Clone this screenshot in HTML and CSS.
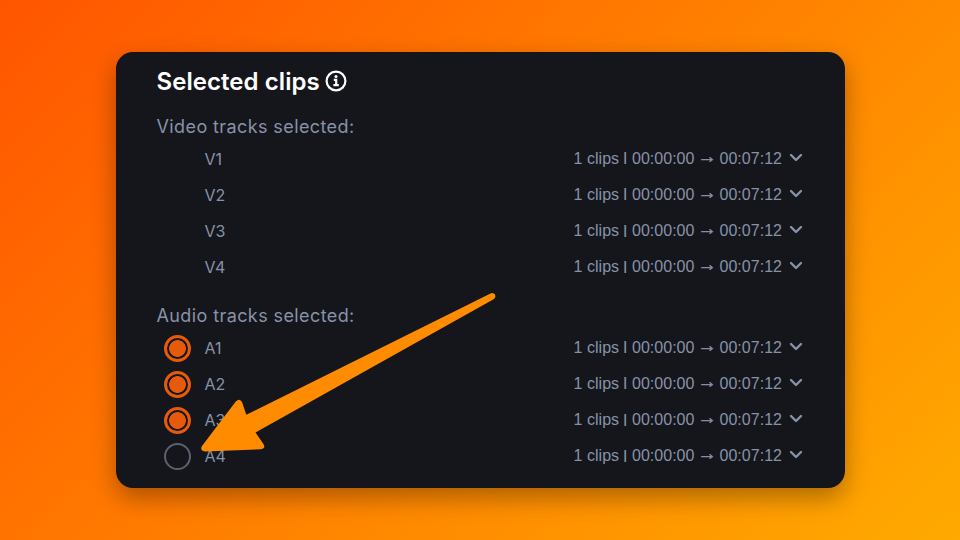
FILE: index.html
```html
<!doctype html>
<html lang="en">
    <head>
        <meta charset="UTF-8" />
        <meta name="viewport" content="width=device-width, initial-scale=1.0" />
        <title>Selected clips</title>
        <link rel="stylesheet" href="styles.css">
    </head>
    <body>
        <main class="card">
            <h1 class="title">
                <span>Selected clips</span>
                <svg class="info-icon" viewBox="0 0 22 22">
                    <circle cx="11" cy="11" r="9.4" />
                    <path d="M8.8 9.8h2.4v5M8.4 15.1h5.4" />
                    <circle class="dot" cx="11" cy="6.6" r="1.5" />
                </svg>
            </h1>

            <section class="tracks">
                <h2>Video tracks selected:</h2>
                <ul id="videoTracks"></ul>
            </section>

            <section class="tracks">
                <h2>Audio tracks selected:</h2>
                <ul id="audioTracks"></ul>
            </section>
        </main>

        <!-- arrow pointing at the A4 toggle -->
        <svg class="pointer" viewBox="0 0 960 540">
            <path d="M490.5 293.4Q493.5 292.2 495 294.6Q496.2 297.6 493.6 299.2L255.5 432.4L263.6 444.2Q265.8 448.6 261 449.2L205 451.4Q199.5 450.6 202 446L235.8 401.5Q239.8 397.4 242.2 402.4L246.3 414.7Z" />
        </svg>

        <script>
        const videoTracks = [{ name: "V1" }, { name: "V2" }, { name: "V3" }, { name: "V4" }];
        const audioTracks = [
            { name: "A1", selected: true },
            { name: "A2", selected: true },
            { name: "A3", selected: true },
            { name: "A4", selected: false },
        ];

        function renderTracks(id, tracks) {
            const list = document.getElementById(id);

            tracks.forEach((track) => {
                let radio = "";
                if ("selected" in track) {
                    radio = `<span class="radio ${track.selected ? "on" : ""}"></span>`;
                }

                const row = document.createElement("li");
                row.className = "track";
                row.innerHTML = `
                    <span class="toggle">${radio}</span>
                    <span class="name">${track.name}</span>
                    <span class="range">1 clips <span class="bar">|</span> 00:00:00 <span class="arrow">→</span> 00:07:12</span>
                    <svg class="chevron" viewBox="0 0 14 10"><path d="M2 2l5 5 5-5" /></svg>`;
                list.appendChild(row);
            });
        }

        renderTracks("videoTracks", videoTracks);
        renderTracks("audioTracks", audioTracks);
        </script>
    </body>
</html>
```

FILE: styles.css
```css
* {
    box-sizing: border-box;
    margin: 0;
    padding: 0;
}

body {
    font-family: Inter, "Liberation Sans", sans-serif;
    background: linear-gradient(135deg, #ff5500, #ffaa00);
    width: 960px;
    height: 540px;
    padding: 52px 115px 52px 116px;
    overflow: hidden;
}

.card {
    height: 436px;
    padding: 13px 42.5px 0 40.5px;
    border-radius: 17px;
    background-color: #15161b;
    color: #8792a9;
    box-shadow: 0 10px 24px rgba(0, 0, 0, 0.32);
}

.title {
    display: flex;
    align-items: center;
    gap: 5.5px;
    height: 32px;
    color: #fff;
    font-size: 24px;
    font-weight: 600;
    letter-spacing: 0.06px;
}

.info-icon {
    width: 22px;
    height: 22px;
    fill: none;
    stroke: #fff;
    stroke-width: 2.2;
}

.info-icon .dot {
    fill: #fff;
    stroke: none;
}

.tracks {
    padding-top: 17px;
}

.tracks + .tracks {
    padding-top: 18px;
}

h2 {
    height: 26px;
    line-height: 26px;
    font-size: 18px;
    font-weight: 400;
    letter-spacing: 0.4px;
}

ul {
    list-style: none;
}

.track {
    display: flex;
    align-items: center;
    height: 36.15px;
    font-size: 16px;
}

#videoTracks {
    height: 145px;
}

.toggle {
    width: 48px;
    padding: 3px 0 0 7px;
}

.radio {
    display: block;
    width: 27px;
    height: 27px;
    border: 2px solid #5c616e;
    border-radius: 50%;
}

.radio.on {
    border: 3px solid #e65a0c;
    background: radial-gradient(circle, #e65a0c 8px, transparent 8.7px);
}

.name {
    padding-top: 2px;
}

.range {
    margin-left: auto;
    padding-top: 0.5px;
    font-family: "Liberation Sans", Arial, sans-serif;
    letter-spacing: 0.03px;
    white-space: nowrap;
}

.bar {
    padding-right: 0.5px;
    font-size: 12px;
    font-weight: 700;
    vertical-align: 2.5px;
}

.arrow {
    display: inline-block;
    line-height: 1;
    vertical-align: 2px;
    transform: scale(1.2);
    -webkit-text-stroke: 0.4px #8792a9;
}

.chevron {
    width: 14px;
    height: 10px;
    margin-left: 6.5px;
    fill: none;
    stroke: #8792a9;
    stroke-width: 2.4;
    stroke-linecap: round;
    stroke-linejoin: round;
}

.pointer {
    position: absolute;
    top: 0;
    left: 0;
    width: 960px;
    height: 540px;
    fill: #ff8c00;
    pointer-events: none;
}
```
